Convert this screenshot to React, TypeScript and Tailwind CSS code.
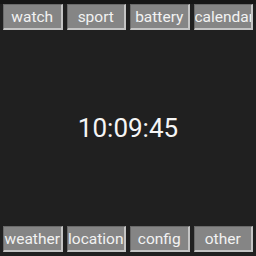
const top = ["watch", "sport", "battery", "calendar"];
const bottom = ["weather", "location", "config", "other"];

function Btn({ label }: { label: string }) {
  return (
    <button className="block h-[26px] w-full overflow-hidden whitespace-nowrap border-t border-l border-t-[#6a6a6a] border-l-[#6a6a6a] border-b-[2px] border-r-[2px] border-b-[#c4c4c4] border-r-[#c4c4c4] bg-[#858585] px-0 text-center text-[15.5px] leading-[22px] text-[#f2f2f2]">
      {label}
    </button>
  );
}

export default function App() {
  return (
    <div
      className="flex h-[256px] w-[256px] flex-col justify-between bg-[#202020]"
      style={{ fontFamily: "Roboto, 'Noto Sans', sans-serif" }}
    >
      <div className="bg-[#161616] pt-[4px]">
        <div className="grid grid-cols-4 gap-[4px] bg-[#202020] px-[3px]">
          {top.map((t) => (
            <Btn key={t} label={t} />
          ))}
        </div>
      </div>
      <div className="text-center text-[26px] text-[#f5f5f5]">10:09:45</div>
      <div className="grid grid-cols-4 gap-[4px] px-[3px] pb-[4px]">
        {bottom.map((t) => (
          <Btn key={t} label={t} />
        ))}
      </div>
    </div>
  );
}
